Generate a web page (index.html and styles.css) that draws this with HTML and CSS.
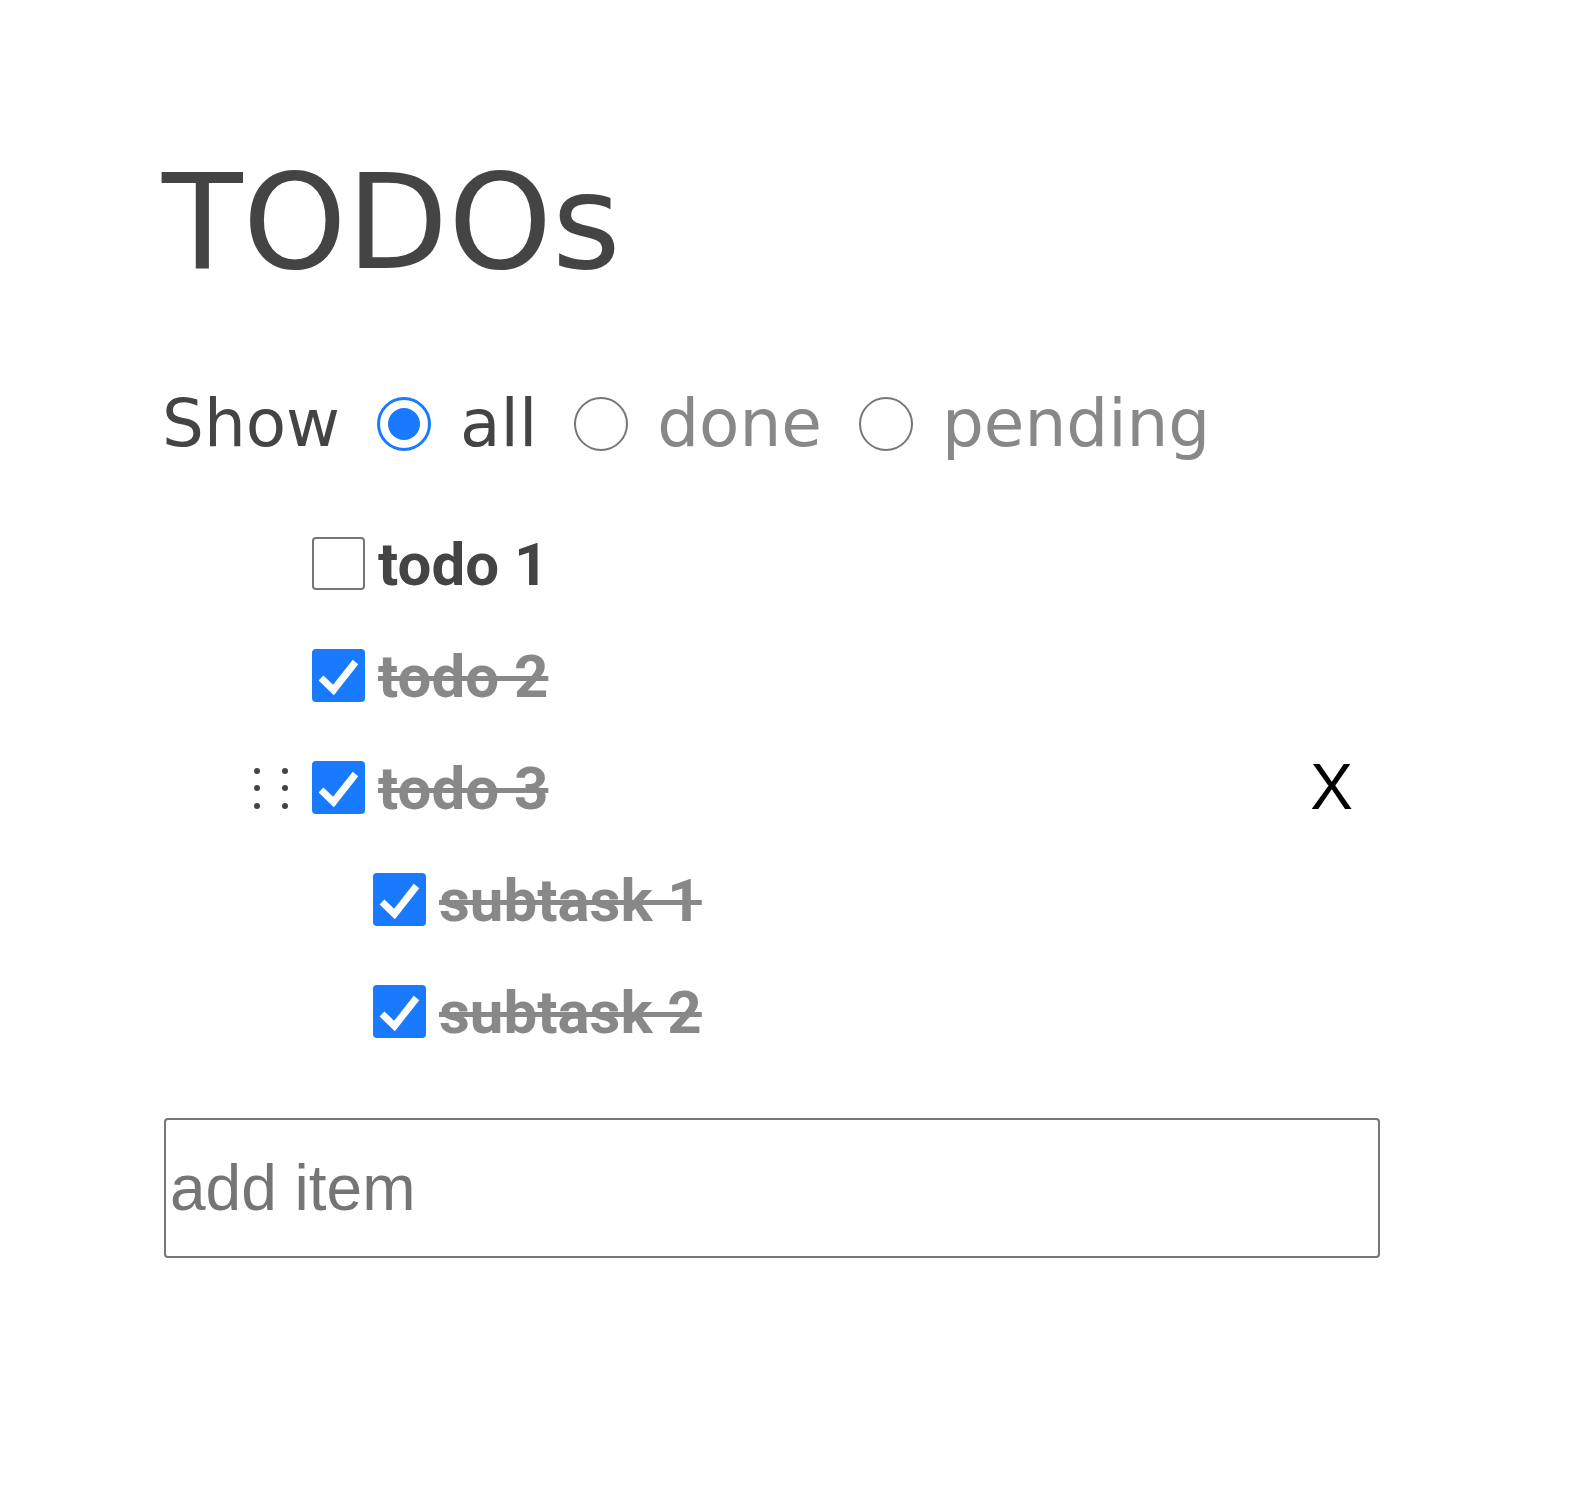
FILE: index.html
```html
<!DOCTYPE html>
<html lang="en">
<head>
<meta charset="utf-8">
<title>TODOs</title>
<link rel="stylesheet" href="styles.css">
</head>
<body>
<main class="app">
  <h1 class="title">TODOs</h1>
  <div class="filter">
    <span class="filter-label">Show</span>
    <label class="option"><span class="radio checked"></span><span class="option-text">all</span></label>
    <label class="option muted"><span class="radio"></span><span class="option-text">done</span></label>
    <label class="option muted"><span class="radio"></span><span class="option-text">pending</span></label>
  </div>
  <ul class="todos">
    <li class="todo">
      <span class="handle"><i></i><i></i><i></i><i></i><i></i><i></i></span>
      <span class="box"></span>
      <span class="todo-text">todo 1</span>
    </li>
    <li class="todo done">
      <span class="handle"><i></i><i></i><i></i><i></i><i></i><i></i></span>
      <span class="box checked"><svg viewBox="0 0 53 53" width="53" height="53"><path d="M9 29 L21.5 41 L43.5 13" fill="none" stroke="#fff" stroke-width="7"/></svg></span>
      <span class="todo-text">todo 2</span>
    </li>
    <li class="todo done active">
      <span class="handle"><i></i><i></i><i></i><i></i><i></i><i></i></span>
      <span class="box checked"><svg viewBox="0 0 53 53" width="53" height="53"><path d="M9 29 L21.5 41 L43.5 13" fill="none" stroke="#fff" stroke-width="7"/></svg></span>
      <span class="todo-text">todo 3</span>
      <span class="remove">X</span>
    </li>
    <li class="todo done sub">
      <span class="handle"><i></i><i></i><i></i><i></i><i></i><i></i></span>
      <span class="box checked"><svg viewBox="0 0 53 53" width="53" height="53"><path d="M9 29 L21.5 41 L43.5 13" fill="none" stroke="#fff" stroke-width="7"/></svg></span>
      <span class="todo-text">subtask 1</span>
    </li>
    <li class="todo done sub">
      <span class="handle"><i></i><i></i><i></i><i></i><i></i><i></i></span>
      <span class="box checked"><svg viewBox="0 0 53 53" width="53" height="53"><path d="M9 29 L21.5 41 L43.5 13" fill="none" stroke="#fff" stroke-width="7"/></svg></span>
      <span class="todo-text">subtask 2</span>
    </li>
  </ul>
  <input class="add-input" type="text" placeholder="add item">
</main>
</body>
</html>
```
FILE: styles.css
```css
html, body {
  margin: 0;
  padding: 0;
  background: #fff;
}

.app {
  padding: 156px 0 0 162px;
}

.title {
  margin: 0;
  font: 400 132px/1 "DejaVu Sans", sans-serif;
  color: #444;
}

.filter {
  margin-top: 103px;
  display: flex;
  align-items: center;
  height: 66px;
  font: 400 66px/1 "DejaVu Sans", sans-serif;
  color: #444;
}

.option {
  display: flex;
  align-items: center;
}

.option.muted {
  color: #888;
}

.radio {
  flex: none;
  box-sizing: border-box;
  width: 54px;
  height: 54px;
  margin-left: 37px;
  border: 2px solid #767676;
  border-radius: 50%;
  position: relative;
}

.radio.checked {
  border: 3px solid #1a7aff;
}

.radio.checked::after {
  content: "";
  position: absolute;
  left: 8px;
  top: 8px;
  width: 32px;
  height: 32px;
  border-radius: 50%;
  background: #1a7aff;
}

.option-text {
  margin-left: 29px;
}

.todos {
  list-style: none;
  margin: 50px 0 0;
  padding: 0;
  width: 1191px;
}

.todo {
  display: flex;
  align-items: center;
  height: 112px;
  padding-left: 92px;
}

.todo.sub {
  padding-left: 153px;
}

.handle {
  flex: none;
  width: 34px;
  height: 41px;
  display: grid;
  grid-template-columns: 6px 6px;
  grid-template-rows: repeat(3, 6px);
  justify-content: space-between;
  align-content: space-between;
  visibility: hidden;
  margin-top: 2px;
}

.handle i {
  display: block;
  width: 6px;
  height: 6px;
  border-radius: 50%;
  background: #444;
}

.todo.active .handle {
  visibility: visible;
}

.box {
  flex: none;
  box-sizing: border-box;
  width: 53px;
  height: 53px;
  margin-left: 24px;
  border: 2px solid #767676;
  border-radius: 4px;
}

.box.checked {
  border: none;
  background: #1a7aff;
}

.box svg {
  display: block;
}

.todo-text {
  margin-left: 13px;
  margin-top: 3px;
  font: 700 60px/1 Roboto, sans-serif;
  color: #444;
  white-space: nowrap;
}

.todo.done .todo-text {
  color: #888;
  text-decoration: line-through;
  text-decoration-thickness: 5px;
}

.remove {
  margin-left: auto;
  font: 400 64px/1 "Liberation Sans", Arial, sans-serif;
  color: #000;
  cursor: pointer;
}

.add-input {
  display: block;
  box-sizing: border-box;
  margin: 51px 0 0 2px;
  width: 1216px;
  height: 140px;
  padding: 0 4px;
  border: 2px solid #767676;
  border-radius: 4px;
  font: 400 64px "Liberation Sans", Arial, sans-serif;
  color: #000;
  background: #fff;
  outline: none;
}

.add-input::placeholder {
  color: #757575;
}
```
